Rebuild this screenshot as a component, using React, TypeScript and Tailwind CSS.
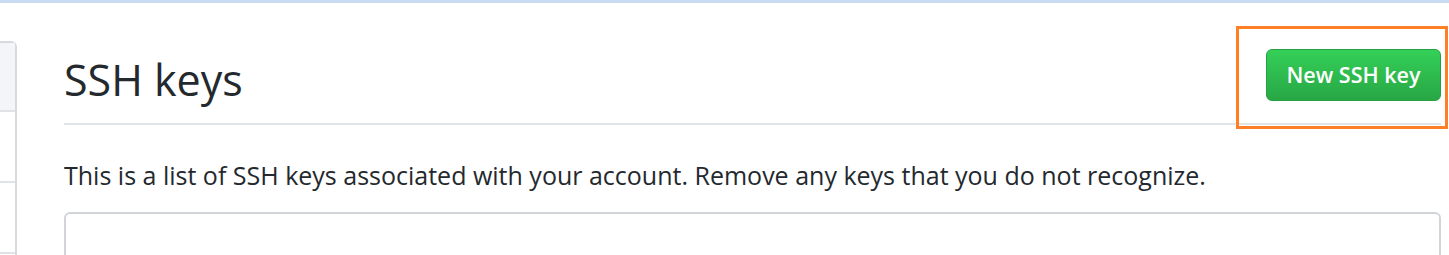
import React from "react";

export default function App() {
  return (
    <div
      className="relative w-[1449px] h-[255px] overflow-hidden bg-white"
      style={{ fontFamily: '"Segoe UI", "Open Sans", "Noto Sans", sans-serif' }}
    >
      <div className="h-[3px] bg-[#c9dbf1]" />
      <div className="flex">
        <div className="mt-[38px] w-[17px] shrink-0 flex flex-col border-t-2 border-r-2 border-[#d6d9de] rounded-tr-[6px]">
          <div className="h-[67px] bg-[#f4f5f8]" />
          <div className="h-[71px] border-t-2 border-[#dfe2e6]" />
          <div className="h-[71px] border-t-2 border-[#dfe2e6]" />
          <div className="h-[20px] border-t-2 border-[#dfe2e6]" />
        </div>
        <div className="ml-[47px] w-[1377px] shrink-0">
          <div className="flex items-start justify-between h-[122px] border-b-2 border-[#e1e4e8]">
            <h2 className="text-[43px] leading-none text-[#24292e] mt-[55px]">SSH keys</h2>
            <button className="mt-[46px] h-[52px] w-[175px] rounded-[6px] border border-[#279f43] bg-gradient-to-b from-[#34d058] to-[#28a745] text-white text-[21.5px] font-semibold">
              New SSH key
            </button>
          </div>
          <p className="mt-[34px] text-[25px] leading-[32px] text-[#24292e]">
            This is a list of SSH keys associated with your account. Remove any keys that you do not recognize.
          </p>
          <div className="mt-[21px] h-[60px] border-2 border-[#d1d5da] rounded-[6px]" />
        </div>
      </div>
      <div className="absolute left-[1236px] top-[26px] w-[212px] h-[103px] border-[3px] border-[#ff7f27]" />
    </div>
  );
}
